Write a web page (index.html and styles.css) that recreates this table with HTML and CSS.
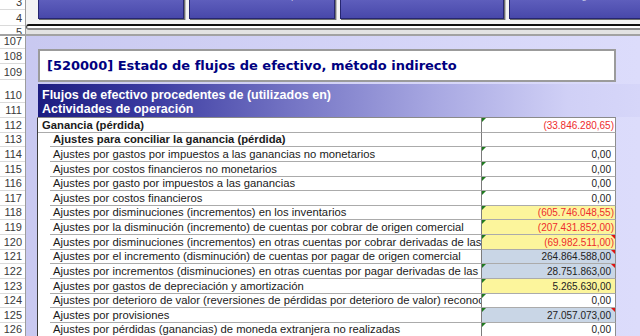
FILE: index.html
```html
<!DOCTYPE html>
<html lang="es">
<head>
<meta charset="utf-8">
<title>Estado de flujos de efectivo</title>
<link rel="stylesheet" href="styles.css">
</head>
<body>
<div class="top">
  <div class="rh-col">
    <div class="rh r3">3</div>
    <div class="rh r4">4</div>
    <div class="rh r5">5</div>
  </div>
  <div class="toolbar">
    <div class="buttons">
      <div class="btn b1"></div>
      <div class="btn b2">IFRS for Excel Reports</div>
      <div class="btn b3">Ixbrl Print Personalizable Model</div>
      <div class="btn b4">Homologación</div>
    </div>
    <div class="rule"></div>
    <div class="band"></div>
  </div>
</div>
<div class="freeze"></div>
<div class="sheet">
  <div class="rh-col">
    <div class="rh h107">107</div>
    <div class="rh h108">108</div>
    <div class="rh h109">109</div>
    <div class="rh h110">110</div>
    <div class="rh h111">111</div>
    <div class="rh hr">112</div>
    <div class="rh hr">113</div>
    <div class="rh hr">114</div>
    <div class="rh hr">115</div>
    <div class="rh hr">116</div>
    <div class="rh hr">117</div>
    <div class="rh hr">118</div>
    <div class="rh hr">119</div>
    <div class="rh hr">120</div>
    <div class="rh hr">121</div>
    <div class="rh hr">122</div>
    <div class="rh hr">123</div>
    <div class="rh hr">124</div>
    <div class="rh hr">125</div>
    <div class="rh hr">126</div>
  </div>
  <div class="strip"></div>
  <div class="content">
    <div class="title">[520000] Estado de flujos de efectivo, método indirecto</div>
    <div class="head">Flujos de efectivo procedentes de (utilizados en)<br>Actividades de operación</div>
    <div class="table">
      <div class="row">
        <div class="lbl"><div class="lbl-in lvl0 b">Ganancia (pérdida)</div></div>
        <div class="val neg g">(33.846.280,65)</div>
      </div>
      <div class="row">
        <div class="lbl"><div class="lbl-in b">Ajustes para conciliar la ganancia (pérdida)</div></div>
        <div class="val"></div>
      </div>
      <div class="row">
        <div class="lbl"><div class="lbl-in">Ajustes por gastos por impuestos a las ganancias no monetarios</div></div>
        <div class="val g">0,00</div>
      </div>
      <div class="row">
        <div class="lbl"><div class="lbl-in">Ajustes por costos financieros no monetarios</div></div>
        <div class="val g">0,00</div>
      </div>
      <div class="row">
        <div class="lbl"><div class="lbl-in">Ajustes por gasto por impuestos a las ganancias</div></div>
        <div class="val g">0,00</div>
      </div>
      <div class="row">
        <div class="lbl"><div class="lbl-in">Ajustes por costos financieros</div></div>
        <div class="val g">0,00</div>
      </div>
      <div class="row">
        <div class="lbl"><div class="lbl-in">Ajustes por disminuciones (incrementos) en los inventarios</div></div>
        <div class="val yel neg g">(605.746.048,55)</div>
      </div>
      <div class="row">
        <div class="lbl"><div class="lbl-in">Ajustes por la disminución (incremento) de cuentas por cobrar de origen comercial</div></div>
        <div class="val yel neg g">(207.431.852,00)</div>
      </div>
      <div class="row">
        <div class="lbl"><div class="lbl-in">Ajustes por disminuciones (incrementos) en otras cuentas por cobrar derivadas de las actividades de operación</div></div>
        <div class="val yel neg g rt">(69.982.511,00)</div>
      </div>
      <div class="row">
        <div class="lbl"><div class="lbl-in">Ajustes por el incremento (disminución) de cuentas por pagar de origen comercial</div></div>
        <div class="val blu rt">264.864.588,00</div>
      </div>
      <div class="row">
        <div class="lbl"><div class="lbl-in">Ajustes por incrementos (disminuciones) en otras cuentas por pagar derivadas de las actividades de operación</div></div>
        <div class="val blu g rt">28.751.863,00</div>
      </div>
      <div class="row">
        <div class="lbl"><div class="lbl-in">Ajustes por gastos de depreciación y amortización</div></div>
        <div class="val yel g">5.265.630,00</div>
      </div>
      <div class="row">
        <div class="lbl"><div class="lbl-in">Ajustes por deterioro de valor (reversiones de pérdidas por deterioro de valor) reconocidas en el resultado del periodo</div></div>
        <div class="val g">0,00</div>
      </div>
      <div class="row">
        <div class="lbl"><div class="lbl-in">Ajustes por provisiones</div></div>
        <div class="val blu g rt">27.057.073,00</div>
      </div>
      <div class="row">
        <div class="lbl"><div class="lbl-in">Ajustes por pérdidas (ganancias) de moneda extranjera no realizadas</div></div>
        <div class="val g">0,00</div>
      </div>
    </div>
  </div>
</div>
</body>
</html>
```
FILE: styles.css
```css
* { box-sizing: border-box; }
html, body { margin: 0; padding: 0; }
body {
  width: 640px;
  height: 336px;
  overflow: hidden;
  font-family: "Liberation Sans", Arial, sans-serif;
  font-size: 11px;
  color: #1a1a1a;
  background: #fff;
}

/* ---------- top frozen area ---------- */
.top { display: flex; height: 34px; overflow: hidden; }
.rh-col {
  width: 26px;
  flex: none;
  display: flex;
  flex-direction: column;
  background: #fff;
  border-right: 1px solid #9c9c9c;
}
.rh {
  flex: none;
  display: flex;
  align-items: flex-end;
  justify-content: flex-end;
  padding-right: 3px;
  line-height: 13px;
  color: #3a3a3a;
  border-bottom: 1px solid #dadada;
  overflow: hidden;
}
.r3 { height: 10px; }
.r4 { height: 16px; }
.r5 { height: 14px; }

.toolbar { flex: 1; display: flex; flex-direction: column; background: #f4f4f4; }
.buttons {
  display: flex;
  align-items: flex-end;
  gap: 5px;
  height: 19px;
  padding-left: 12px;
}
.btn {
  flex: none;
  height: 30px;
  background: linear-gradient(#6a6ac6, #4848aa);
  border: 1px solid #262670;
  box-shadow: 1px 1px 0 #6e6e6e, 2px 1px 0 #bdbdbd;
  color: #c4c4e8;
  font-size: 10px;
  line-height: 12px;
  padding-top: 0;
  text-align: center;
  white-space: nowrap;
  overflow: hidden;
}
.b1 { width: 146px; }
.b2 { width: 146px; }
.b3 { width: 164px; }
.b4 { width: 140px; }

.rule {
  margin-top: 5px;
  height: 6px;
  background: #fff;
  border-top: 2px solid #111;
  border-bottom: 2px solid #8a8a8a;
  border-left: 1px solid #555;
  border-radius: 3px 0 0 3px;
}
.band { flex: 1; background: #e3e3e3; }
.freeze { height: 2px; background: #a2a2a2; }

/* ---------- sheet ---------- */
.sheet {
  display: flex;
  height: 300px;
  background: linear-gradient(to right, #c8c8f0, #dcdcfb);
}
.h107 { height: 13px; }
.h108 { height: 15px; }
.h109 { height: 16px; }
.h110 { height: 23px; }
.h111 { height: 15px; }
.hr { height: 14.64px; }

.strip { width: 11px; flex: none; }
.content { flex: 1; display: flex; flex-direction: column; min-width: 0; }

.title {
  margin: 13px 24px 0 1px;
  height: 33px;
  flex: none;
  border: 2px solid #9b9b9b;
  background: #fff;
  display: flex;
  align-items: center;
  padding-left: 7px;
  font-family: "DejaVu Sans", Verdana, sans-serif;
  font-weight: bold;
  font-size: 13px;
  color: #000080;
}
.head {
  margin: 2px 0 0 1px;
  height: 33px;
  flex: none;
  padding: 4px 0 0 4px;
  background: linear-gradient(to right, #1c1c80 0%, #3a3aa0 18%, #7474c4 42%, #a8a8e2 66%, #d0d0f6 88%, #d6d6f9 100%);
  color: #fff;
  font-weight: bold;
  font-size: 12.5px;
  line-height: 14px;
}

.table { width: 579px; border-top: 1px solid #8a8a8a; background: #fff; }
.row {
  display: grid;
  grid-template-columns: 444px 135px;
  height: 14.64px;
}
.lbl { border-left: 1px solid #3c3c3c; background: #fff; overflow: hidden; min-width: 0; }
.lbl-in {
  height: 100%;
  margin-left: 12px;
  padding-left: 3px;
  border-bottom: 1px solid #ababab;
  white-space: nowrap;
  overflow: hidden;
  font-size: 11.25px;
  line-height: 13px;
  display: flex;
  align-items: flex-end;
}
.lbl-in.lvl0 { margin-left: 0; padding-left: 4px; }
.b { font-weight: bold; }

.val {
  position: relative;
  display: flex;
  align-items: flex-end;
  justify-content: flex-end;
  border-left: 1px solid #7c7c7c;
  border-right: 1px solid #8e8e8e;
  border-bottom: 1px solid #ababab;
  background: #fff;
  font-size: 10px;
  line-height: 13px;
  padding-right: 4px;
  color: #222;
  white-space: nowrap;
}
.val.neg { color: #ee2c2c; padding-right: 1px; }
.val.yel { background: #fcf59c; }
.val.blu { background: #c9d6e6; }
.val.g::before {
  content: "";
  position: absolute;
  left: 0;
  top: 0;
  border-top: 4px solid #1f7a1f;
  border-right: 4px solid transparent;
}
.val.rt::after {
  content: "";
  position: absolute;
  right: 0;
  top: 0;
  border-top: 4px solid #e01212;
  border-left: 4px solid transparent;
}
```
